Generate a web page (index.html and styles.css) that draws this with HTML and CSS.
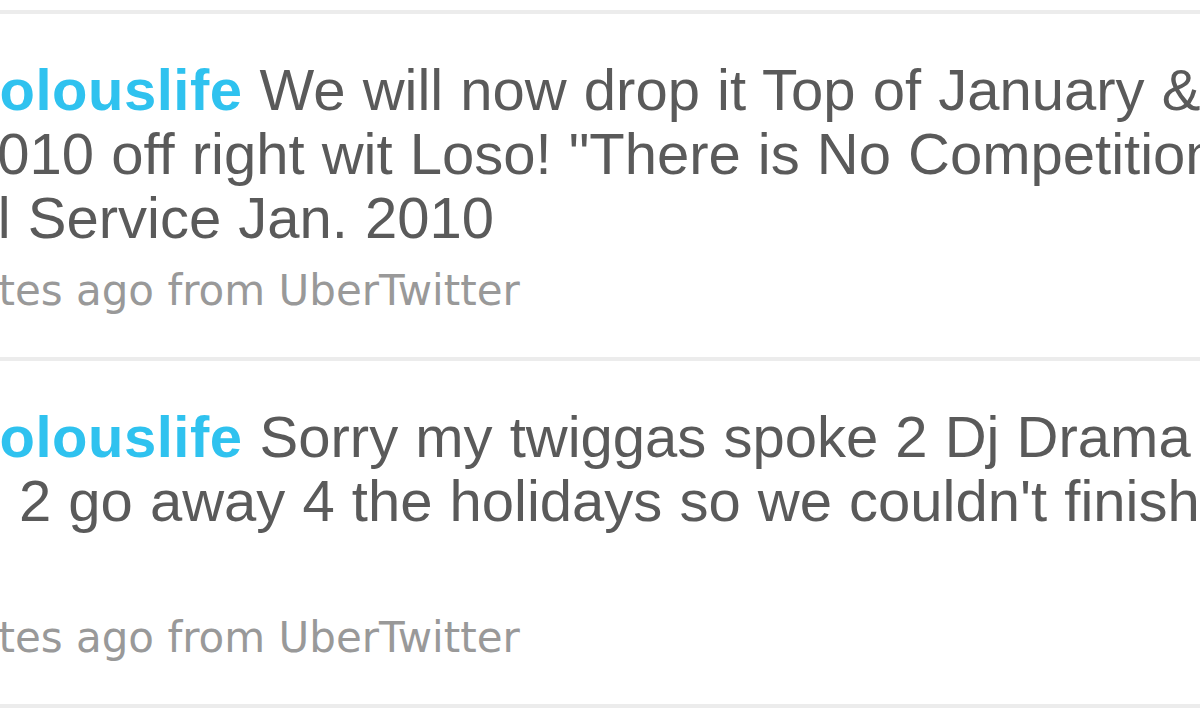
FILE: index.html
```html
<!DOCTYPE html>
<html>
<head>
<meta charset="utf-8">
<link rel="stylesheet" href="styles.css">
</head>
<body>
<div class="timeline">
  <div class="tweet">
    <div class="body">
      <div class="line t1l1"><a class="user">fabolouslife</a> We will now drop it Top of January &amp; kick</div>
      <div class="line t1l2">2010 off right wit Loso! "There is No Competition 2: The</div>
      <div class="line t1l3">Funeral Service Jan. 2010</div>
    </div>
    <div class="meta">about 3 minutes ago from <a class="src">UberTwitter</a></div>
  </div>
  <div class="tweet">
    <div class="body">
      <div class="line t2l1"><a class="user">fabolouslife</a> Sorry my twiggas spoke 2 Dj Drama &amp; he</div>
      <div class="line t2l2">had 2 go away 4 the holidays so we couldn't finish</div>
      <div class="line t2l3">it.</div>
    </div>
    <div class="meta">about 8 minutes ago from <a class="src">UberTwitter</a></div>
  </div>
</div>
</body>
</html>
```

FILE: styles.css
```css
html, body {
  margin: 0;
  padding: 0;
  background: #ffffff;
}
body {
  width: 1200px;
  height: 720px;
  overflow: hidden;
}
.timeline {
  margin-top: 10px;
  border-top: 4px solid #ececec;
}
.tweet {
  border-bottom: 4px solid #ececec;
  padding: 44px 0 42px;
}
.line {
  font-family: "Liberation Sans", Arial, sans-serif;
  font-size: 58px;
  line-height: 64px;
  color: #5a5a5a;
  white-space: nowrap;
  word-spacing: 1px;
}
.user {
  font-weight: bold;
  color: #2fc2ef;
  letter-spacing: 0.5px;
  text-decoration: none;
}
.t1l1, .t2l1 { margin-left: -89px; }
.t1l2 { margin-left: -35px; }
.t1l3 { margin-left: -186px; }
.t2l2 { margin-left: -95px; }
.t2l3 { margin-left: -300px; }
.meta {
  font-family: "DejaVu Sans", Verdana, sans-serif;
  font-size: 42px;
  line-height: 48px;
  color: #999999;
  white-space: nowrap;
  margin-top: 17px;
  margin-left: -282px;
}
.src {
  color: #999999;
  text-decoration: none;
}
```
